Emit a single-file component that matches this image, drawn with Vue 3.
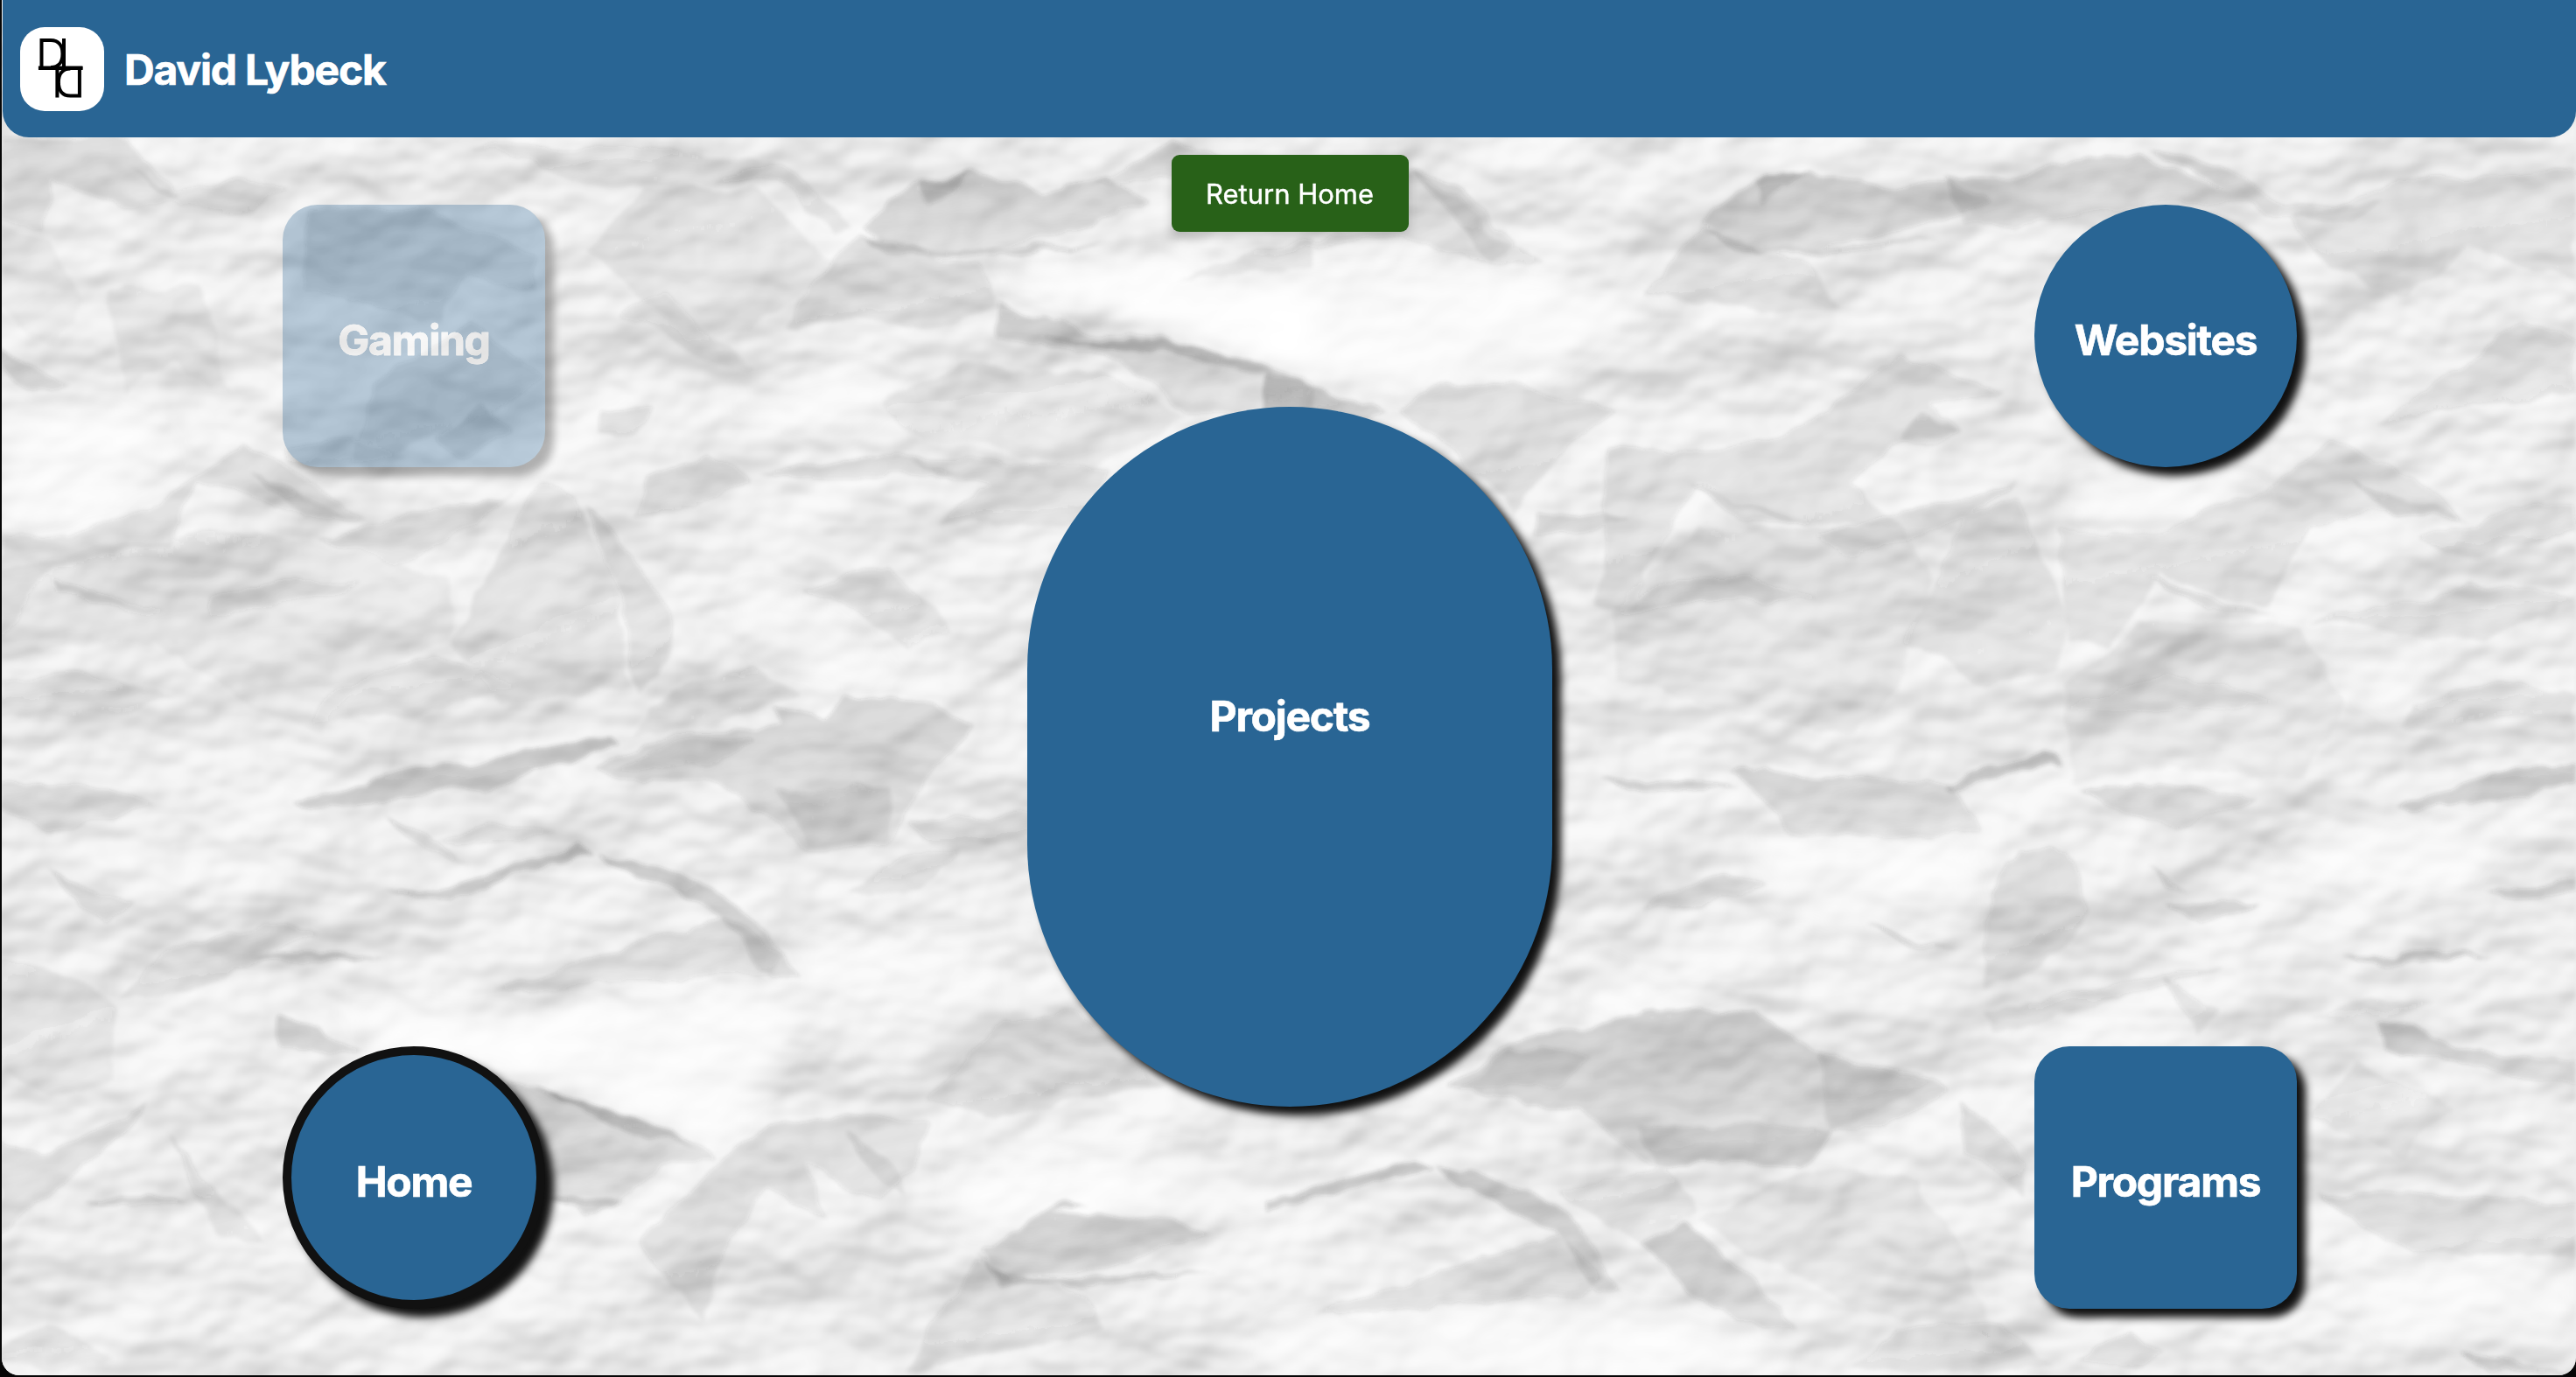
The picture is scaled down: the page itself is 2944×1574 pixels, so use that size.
<script setup>
const tiles = [
  { name: 'Gaming', area: 'gaming', kind: 'square faded' },
  { name: 'Websites', area: 'websites', kind: 'round' },
  { name: 'Projects', area: 'projects', kind: 'large' },
  { name: 'Home', area: 'home', kind: 'round current' },
  { name: 'Programs', area: 'programs', kind: 'square' },
]

// Creases of the paper: [outline, darkness]; a negative value is a highlight.
const leftFolds = [
  ['M0 10L150 10L220 85L150 95L60 60L50 125L0 110Z', 0.14],
  ['M150 40L210 80L290 60L340 75L300 100L220 95Z', 0.14],
  ['M0 120L60 140L100 215L60 270L0 220Z', 0.05],
  ['M0 272L50 310L85 325L40 325L0 300Z', 0.2],
  ['M130 200L240 195L275 330L210 290L150 330Z', 0.06],
  ['M370 100L500 95L640 160L640 200L560 175L520 240L440 215L360 205Z', 0.14],
  ['M450 320L560 240L650 310L600 345L480 400L420 420Z', 0.12],
  ['M520 385L570 345L610 380L550 410Z', 0.16],
  ['M340 400L420 385L480 410L440 422L345 422Z', 0.12],
  ['M560 20L740 20L930 40L890 65L700 70L640 40Z', 0.1],
  ['M850 60L935 40L1020 120L1000 130L930 60Z', 0.12],
  ['M1030 120L1105 60L1160 50L1240 75L1320 60L1370 90L1240 140L1180 155L1070 152Z', 0.2],
  ['M1028 130L1075 150L1200 152L1320 140L1220 158L1065 157Z', 0.26],
  ['M1100 65L1160 50L1130 75L1110 90Z', 0.24],
  ['M1028 130L1165 170L1190 225L1100 250L1020 235L935 250L970 190Z', 0.13],
  ['M1190 215L1310 255L1420 268L1570 320L1570 350L1420 355L1340 285L1190 262Z', 0.18],
  ['M1225 260L1430 270L1570 325L1400 282Z', 0.28],
  ['M1400 15L1530 60L1400 60L1300 70Z', 0.16],
  ['M1410 190L1500 150L1568 140L1568 170Z', 0.1],
  ['M770 70L900 70L1000 170L900 250L820 260L760 200L700 150Z', 0.07],
  ['M740 230L790 200L830 240L900 300L840 290L790 250Z', 0.1],
  ['M1050 340L1150 290L1330 310L1420 360L1300 430L1200 400L1080 380Z', 0.07],
  ['M0 505L80 510L190 470L290 390L400 460L440 490L350 480L240 440L200 520L60 550L0 640Z', 0.12],
  ['M0 550L150 520L300 500L420 530L540 560L540 640L420 700L380 760L300 720L180 640L0 660Z', 0.06],
  ['M300 430L430 490L360 485Z', 0.16],
  ['M380 515L500 480L600 465L620 450L560 500L470 545Z', 0.15],
  ['M60 565L200 605L150 605L70 580Z', 0.16],
  ['M250 610L330 595L430 570L350 560L250 590Z', 0.13],
  ['M540 640L620 480L650 440L690 460L730 560L755 700L600 720Z', 0.09],
  ['M700 470L730 500L800 600L800 660L765 710L740 590Z', 0.14],
  ['M720 355L780 350L760 380L710 385Z', 0.13],
  ['M770 430L850 410L900 440L850 465L760 490Z', 0.13],
  ['M910 430L1060 410L1150 430L1000 440Z', 0.17],
  ['M1070 412L1240 418L1330 430L1290 500L1120 490L1180 450Z', 0.13],
  ['M960 580L1060 545L1140 630L1080 650L1020 600Z', 0.11],
  ['M800 700L900 670L960 710L860 740L760 760Z', 0.09],
  ['M0 690L90 680L210 710L150 730L0 740Z', 0.1],
  ['M400 700L520 660L620 700L500 730L370 750Z', 0.1],
  ['M0 820L130 825L180 850L60 885L0 850Z', 0.14],
  ['M350 850L430 825L500 800L560 795L730 760L740 772L640 805L580 835L540 825L440 845L370 858Z', 0.28],
  ['M710 800L820 755L930 750L920 725L990 740L1010 710L1110 720L1165 750L1110 810L1080 860L1060 900L970 905L920 865L840 815L740 815Z', 0.17],
  ['M730 805L830 760L900 765L860 800Z', 0.15],
  ['M930 830L1060 825L1060 895L970 900Z', 0.12],
  ['M520 890L590 870L660 880L600 900Z', 0.14],
  ['M460 860L520 890L565 925L490 890Z', 0.16],
  ['M460 960L520 955L690 900L710 910L640 925L540 965Z', 0.3],
  ['M715 908L790 925L880 970L920 1020L960 1070L920 1065L860 985L750 930Z', 0.24],
  ['M870 990L930 1035L920 1060L780 1070L590 1085L690 1045Z', 0.15],
  ['M1010 960L1080 910L1150 905L1100 950Z', 0.11],
  ['M1085 870L1170 865L1230 860L1228 890L1110 895Z', 0.13],
  ['M60 925L110 960L160 970L130 1000L90 975Z', 0.16],
  ['M140 1090L200 1030L320 1000L380 1010L230 1085Z', 0.12],
  ['M300 1040L400 1035L465 1040L350 1048Z', 0.25],
  ['M0 1045L90 1065L140 1100L130 1200L60 1215L0 1180Z', 0.08],
  ['M330 1120L380 1125L430 1160L330 1155Z', 0.2],
  ['M0 1270L50 1290L180 1220L120 1290L0 1390Z', 0.14],
  ['M200 1260L260 1340L320 1400L260 1390Z', 0.11],
  ['M100 1345L230 1345L160 1358Z', 0.2],
  ['M600 1190L700 1225L770 1245L830 1275L850 1300L790 1300L740 1355L650 1350L640 1260Z', 0.18],
  ['M640 1205L780 1248L830 1280L740 1255Z', 0.28],
  ['M650 1345L750 1350L700 1365Z', 0.22],
  ['M870 1290L920 1245L1020 1235L1110 1250L1090 1310L1050 1345L960 1300L990 1370L920 1330L870 1400L840 1500L760 1400Z', 0.12],
  ['M1010 1255L1050 1320L1085 1340L1060 1290Z', 0.13],
  ['M1110 1220L1200 1120L1280 1105L1390 1195L1290 1220L1190 1240Z', 0.13],
  ['M1170 1410L1260 1350L1300 1350L1250 1360L1400 1370L1450 1390L1320 1430L1200 1445Z', 0.2],
  ['M1165 1415L1210 1445L1455 1435L1300 1452L1200 1450Z', 0.3],
  ['M1165 1425L1300 1465L1320 1510L1170 1540L1090 1560L1110 1500Z', 0.12],
  ['M0 1530L60 1500L140 1545L60 1560L0 1545Z', 0.08],
  ['M400 1100L600 1110L900 1080L960 1120L860 1280L700 1210L460 1150Z', -0.55],
  ['M1190 180L1390 160L1568 200L1568 310L1410 260Z', -0.6],
  ['M0 340L150 350L220 400L120 480L0 500Z', -0.45],
  ['M850 340L1040 290L1090 330L1000 390L840 330Z', -0.35],
  ['M880 560L980 600L1080 690L1010 700L900 650Z', -0.4],
  ['M950 1010L1200 1010L1190 1110L1090 1190L960 1130Z', -0.3],
  ['M1130 1310L1400 1280L1568 1330L1568 1360L1150 1390Z', -0.45],
]

const rightFolds = [
  ['M0 160L130 120L170 50L230 80L280 135L340 168L260 165L160 130Z', 0.15],
  ['M175 50L225 65L300 140L270 165L225 100Z', 0.17],
  ['M0 310L70 325L145 355L120 370L0 350Z', 0.27],
  ['M160 355L210 315L300 320L425 350L370 390L300 480L230 400Z', 0.12],
  ['M520 115L600 60L650 48L740 75L820 60L870 90L750 130L660 148L560 145Z', 0.2],
  ['M515 118L560 145L690 148L810 135L710 152L560 152Z', 0.27],
  ['M590 65L650 48L620 70L600 95Z', 0.24],
  ['M520 125L650 165L690 225L600 225L455 205L500 150Z', 0.12],
  ['M815 55L890 65L950 40L1050 30L1180 90L1100 90L1000 100L900 120L840 115Z', 0.18],
  ['M1060 20L1140 40L1220 95L1340 85L1300 115L1210 110Z', 0.16],
  ['M1230 110L1360 60L1568 50L1568 190L1440 150L1370 210L1270 170Z', 0.11],
  ['M1370 340L1500 240L1568 260L1568 330L1430 350L1330 370Z', 0.13],
  ['M410 400L530 405L650 370L760 280L880 330L800 345L830 375L750 395L700 440L760 500L620 490L520 440L470 530L440 600L400 600Z', 0.12],
  ['M420 600L520 500L760 500L800 560L760 700L700 760L520 720L420 690Z', 0.06],
  ['M510 440L660 495L580 490Z', 0.17],
  ['M660 510L800 470L900 440L820 495L700 540Z', 0.14],
  ['M760 390L790 355L830 375L790 400Z', 0.14],
  ['M420 610L520 590L660 590L580 560L470 570Z', 0.15],
  ['M770 640L840 480L900 460L960 610L950 680L850 695Z', 0.1],
  ['M950 500L1060 510L1200 450L1280 390L1380 440L1430 490L1330 475L1250 500L1200 600L1070 560L1010 650L960 640Z', 0.11],
  ['M960 700L1050 620L1240 620L1290 720L1240 820L1080 800L960 820Z', 0.06],
  ['M1300 440L1440 490L1350 480Z', 0.16],
  ['M1380 515L1520 470L1568 470L1568 500L1440 540Z', 0.12],
  ['M1050 560L1210 610L1130 600Z', 0.15],
  ['M1250 615L1340 600L1440 570L1568 590L1460 640L1340 630Z', 0.11],
  ['M960 730L1080 680L1210 720L1080 730Z', 0.11],
  ['M330 480L440 485L390 505L320 510Z', 0.17],
  ['M400 820L510 815L570 825L470 832Z', 0.22],
  ['M565 805L710 815L820 820L860 880L740 890L630 885Z', 0.16],
  ['M815 825L860 800L945 780L952 792L880 810L820 832Z', 0.32],
  ['M970 830L1080 820L1190 840L1090 880Z', 0.15],
  ['M1350 850L1430 825L1500 800L1568 797L1568 815L1510 835L1430 840L1370 855Z', 0.25],
  ['M1370 720L1480 690L1568 710L1568 740L1360 750Z', 0.1],
  ['M450 975L550 935L600 950L520 980Z', 0.14],
  ['M870 960L900 900L960 910L990 980L920 1060L860 1080Z', 0.12],
  ['M720 995L780 1020L840 1030L770 1025Z', 0.24],
  ['M1080 970L1190 970L1120 1000Z', 0.18],
  ['M1060 925L1110 955L1090 950Z', 0.2],
  ['M1460 960L1568 940L1568 955L1500 968Z', 0.25],
  ['M1290 1040L1400 1035L1470 1040L1340 1048Z', 0.25],
  ['M860 1110L1000 1075L1150 1050L1070 1080L960 1110L870 1130Z', 0.11],
  ['M1080 1065L1140 1110L1110 1140Z', 0.12],
  ['M220 1200L290 1150L380 1130L460 1105L590 1110L660 1160L800 1190L820 1210L750 1250L680 1260L640 1300L460 1300L420 1270L380 1230L270 1215Z', 0.19],
  ['M230 1205L290 1155L390 1160L350 1200Z', 0.15],
  ['M450 1255L600 1250L680 1260L640 1300L470 1300Z', 0.14],
  ['M660 1165L800 1195L740 1230L680 1260Z', 0.12],
  ['M0 1350L80 1325L180 1298L200 1305L90 1335L0 1362Z', 0.29],
  ['M200 1300L300 1325L370 1370L430 1460L400 1460L350 1385L240 1330Z', 0.23],
  ['M350 1390L410 1440L380 1465L60 1490L180 1445Z', 0.15],
  ['M450 1400L500 1375L580 1440L640 1505L560 1500Z', 0.2],
  ['M350 1340L480 1300L520 1360L450 1400L400 1370Z', 0.1],
  ['M660 1300L780 1320L840 1420L870 1520L700 1480L520 1370Z', 0.06],
  ['M830 1225L870 1250L915 1300L910 1340L840 1290Z', 0.14],
  ['M1330 1120L1370 1125L1440 1160L1568 1170L1568 1200L1440 1180L1340 1155Z', 0.21],
  ['M1245 1120L1320 1090L1400 1100L1330 1120Z', 0.08],
  ['M1260 1335L1400 1340L1568 1350L1568 1415L1460 1418L1340 1400Z', 0.14],
  ['M1250 1240L1300 1170L1420 1230L1360 1290Z', 0.07],
  ['M760 1510L880 1500L940 1560L700 1560Z', 0.12],
  ['M970 1545L1030 1510L1080 1540L1040 1560Z', 0.15],
  ['M1430 1530L1500 1555L1568 1562L1460 1562Z', 0.24],
  ['M0 180L250 175L470 215L340 300L140 335L0 300Z', -0.55],
  ['M950 440L1150 430L1200 460L1100 510L1000 490Z', -0.45],
  ['M580 890L840 890L850 980L700 1010L620 980Z', -0.4],
  ['M1210 900L1350 860L1480 880L1430 950L1280 950Z', -0.45],
  ['M360 1020L470 1080L600 1080L400 1110Z', -0.4],
  ['M0 1500L400 1465L560 1510L640 1568L0 1568Z', -0.45],
  ['M1290 1430L1568 1420L1568 1530L1330 1520Z', -0.4],
  ['M1250 640L1400 650L1360 740L1290 700Z', -0.35],
]

const sheets = [
  { x: 0, folds: leftFolds },
  { x: 1444, folds: rightFolds },
]
</script>

<template>
  <div class="screen">
    <div class="page">
      <svg class="paper" viewBox="0 0 2944 1574" preserveAspectRatio="none" aria-hidden="true">
        <defs>
          <filter id="cloud" x="0" y="0" width="100%" height="100%" color-interpolation-filters="sRGB">
            <feTurbulence type="fractalNoise" baseFrequency=".005 .0075" numOctaves="4" seed="12" />
            <feDiffuseLighting surfaceScale="20" diffuseConstant="1.02" lighting-color="#fff">
              <feDistantLight azimuth="240" elevation="58" />
            </feDiffuseLighting>
            <feGaussianBlur stdDeviation="2" />
            <feComponentTransfer>
              <feFuncR type="linear" slope=".36" intercept=".617" />
              <feFuncG type="linear" slope=".36" intercept=".617" />
              <feFuncB type="linear" slope=".36" intercept=".617" />
            </feComponentTransfer>
          </filter>
          <filter id="crease" x="0" y="0" width="2944" height="1574" filterUnits="userSpaceOnUse">
            <feTurbulence type="fractalNoise" baseFrequency=".02" numOctaves="3" seed="5" result="n" />
            <feDisplacementMap in="SourceGraphic" in2="n" scale="20" xChannelSelector="R" yChannelSelector="G" />
            <feGaussianBlur stdDeviation="2.2" />
          </filter>
          <filter id="soft" x="-10%" y="-10%" width="120%" height="120%">
            <feGaussianBlur stdDeviation="14" />
          </filter>
          <linearGradient id="dark" x1="0" y1="0" x2=".35" y2="1">
            <stop offset="0" stop-color="#333" />
            <stop offset="1" stop-color="#333" stop-opacity=".5" />
          </linearGradient>
        </defs>
        <rect width="2944" height="1574" fill="#eee" filter="url(#cloud)" />
        <g filter="url(#soft)">
          <g v-for="s in sheets" :key="s.x" :transform="`translate(${s.x} 150) scale(.9566 .9082)`">
            <path v-for="(f, i) in s.folds.filter((f) => f[1] < 0)" :key="i" :d="f[0]" fill="#fff" :opacity="-f[1] * 1.4" />
          </g>
        </g>
        <g filter="url(#crease)">
          <g v-for="s in sheets" :key="s.x" :transform="`translate(${s.x} 150) scale(.9566 .9082)`">
            <path v-for="(f, i) in s.folds.filter((f) => f[1] > 0)" :key="i" :d="f[0]" fill="url(#dark)" :opacity="f[1]" />
          </g>
        </g>
      </svg>

      <header class="bar">
        <svg class="logo" viewBox="0 0 96 96" aria-label="DL">
          <g id="mono" fill="none" stroke="#000" stroke-width="4">
            <path d="M24.5 46V15H35C44 15 48.500 21 48.500 30.500S44 46 35 46" />
            <path d="M50 13V47" />
            <path d="M21 47H71.500" />
          </g>
          <use href="#mono" transform="rotate(180 46.200 46.800)" />
        </svg>
        <h1>David Lybeck</h1>
      </header>

      <button class="return">Return Home</button>

      <main class="board">
        <a v-for="t in tiles" :key="t.name" class="tile" :class="[t.kind, t.area]"><span>{{ t.name }}</span></a>
      </main>
    </div>
  </div>
</template>

<style>
body {
  margin: 0;
  background: #0b0b0b;
}
</style>

<style scoped>
.screen {
  box-sizing: border-box;
  width: 2944px;
  height: 1574px;
  padding: 0 0 2px 2px;
  background: #060606;
  font-family: Inter, "Liberation Sans", sans-serif;
  overflow: hidden;
}
.page {
  position: relative;
  display: flex;
  flex-direction: column;
  height: 1572px;
  border-radius: 0 0 20px 20px;
  background: #ececec;
  overflow: hidden;
}
.paper {
  position: absolute;
  top: 0;
  left: -2px;
  width: 2944px;
  height: 1574px;
}
.bar {
  position: relative;
  display: flex;
  align-items: center;
  gap: 23px;
  box-sizing: border-box;
  height: 157px;
  margin-left: 1px;
  padding-left: 20px;
  border-radius: 0 0 30px 30px;
  background: #296594;
  color: #fff;
}
.logo {
  width: 96px;
  height: 96px;
  border-radius: 28px;
  background: #fff;
}
h1 {
  margin: 0;
  padding-top: 2px;
  font-size: 48px;
  line-height: 60px;
  font-weight: 700;
  letter-spacing: -1.2px;
  -webkit-text-stroke: 0.7px #fff;
}
.return {
  position: absolute;
  top: 177px;
  left: 1336.5px;
  width: 271px;
  height: 88px;
  padding: 2px 0 0;
  border: 0;
  border-radius: 9px;
  background: #286118;
  color: #fff;
  font: 400 31px/40px Inter, sans-serif;
  -webkit-text-stroke: 0.4px #fff;
  box-shadow: 0 4px 12px rgba(0, 0, 0, 0.18);
}
.board {
  position: relative;
  flex: 1;
  display: grid;
  grid-template: "gaming projects websites" 300px ". projects ." 662px "home projects programs" 300px / 300px 600px 300px;
  justify-content: space-between;
  padding: 77px 319px 0 321px;
}
.tile {
  display: flex;
  align-items: center;
  justify-content: center;
  box-sizing: border-box;
  background: #296594;
  color: #fff;
  font-size: 48px;
  line-height: 60px;
  font-weight: 700;
  letter-spacing: -1.25px;
  -webkit-text-stroke: 0.7px #fff;
  padding-top: 9px;
  box-shadow: 10px 10px 10px #111;
}
.square {
  border-radius: 40px;
}
.round {
  border-radius: 50%;
}
.faded {
  opacity: 0.3;
}
.faded span {
  filter: drop-shadow(0 0 0 #fff);
}
.current {
  border: 10px solid #111;
}
.large {
  align-self: center;
  align-items: flex-start;
  height: 800px;
  padding-top: 324px;
  border-radius: 300px;
}
.gaming { grid-area: gaming; }
.websites { grid-area: websites; }
.projects { grid-area: projects; }
.home { grid-area: home; }
.programs { grid-area: programs; }
</style>
